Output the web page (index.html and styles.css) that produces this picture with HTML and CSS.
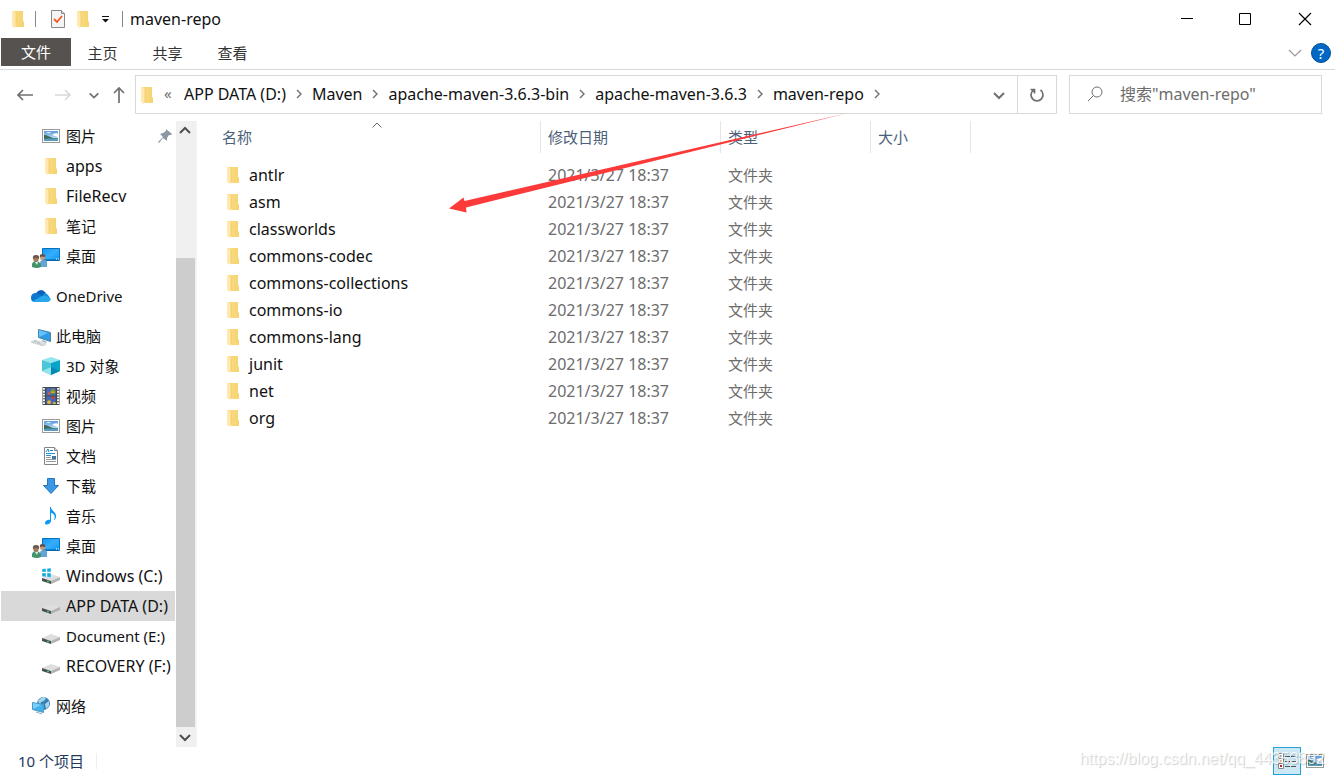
FILE: index.html
```
<!DOCTYPE html>
<html lang="zh-CN">
<head>
<meta charset="utf-8">
<title>maven-repo</title>
<link rel="stylesheet" href="styles.css">
</head>
<body>
<svg class="defs" aria-hidden="true">
  <defs>
    <linearGradient id="gold" x1="0" x2="1"><stop offset="0" stop-color="#fbdc86"/><stop offset="1" stop-color="#f5d370"/></linearGradient>
    <linearGradient id="sky" x1="0" y1="0" x2="0" y2="1"><stop offset="0" stop-color="#5a9be0"/><stop offset="1" stop-color="#e4f4fb"/></linearGradient>
    <linearGradient id="screen" x1="0" y1="0" x2="1" y2="1"><stop offset="0" stop-color="#1594f0"/><stop offset=".5" stop-color="#35aefc"/><stop offset="1" stop-color="#0c96f5"/></linearGradient>
    <symbol id="folder" viewBox="0 0 18 18">
      <path d="M4 1h10v10l1 1v5H5z" fill="url(#gold)"/>
      <path d="M3 1l4 2v13l-1 2-3-2z" fill="#ffe9ae"/><path d="M7 3v13" stroke="#edc65f" stroke-width=".7"/>
    </symbol>
    <symbol id="picture" viewBox="0 0 18 18">
      <rect x=".5" y="2.500" width="17" height="13" fill="#fff" stroke="#9a9a9a"/>
      <path d="M2 4h14v10H2z" fill="url(#sky)"/><path d="M2 8c4 0 5 2 9 3h5v1H2z" fill="#3b6d5d"/><path d="M2 12c5-1 9 0 14-1v3H2z" fill="#5b9cba"/><path d="M4 6q3-2 5 0zM10 8q4-3 6-1v3z" fill="#fff"/>
    </symbol>
    <symbol id="desktop" viewBox="0 0 28 22">
      <path d="M10.500 1.500h17v12h-17z" fill="url(#screen)" stroke="#0873bd"/><path d="M11 13h16" stroke="#075da0"/><path d="M24 12h1m1 0h1" stroke="#fff"/>
      <path d="M8 20v-4q0-3 4-3t3 4v3z" fill="#64a5d5"/><circle cx="10.500" cy="10.500" r="2.500" fill="#c79a75"/><path d="M8 10q-1-3 2.500-3t2.500 3q-3-1-5 0" fill="#5d5048"/>
      <path d="M0 20v-3q1-3 4-3t5 3v3q-4 2-9 0" fill="#43946b"/><circle cx="4" cy="12" r="2.700" fill="#a77957"/><path d="M1 12q-1-4 3-4t3 4q-3-2-6 0" fill="#6a5b50"/><path d="M3 15l2 3 1-3z" fill="#e5eeee"/>
    </symbol>
    <symbol id="cloud" viewBox="0 0 20 18">
      <path d="M5 6q5-6 10 0l-5 6-8-1z" fill="#0860b8"/><path d="M0 11q0-5 5-5 3 0 7 4l-5 5H4q-4 0-4-4" fill="#0c79cf"/><path d="M12 7q3-2 5 1l2 3-7 1z" fill="#1490df"/><path d="M2 14l9-5q5-1 9 3-1 3-4 3H4z" fill="#28a8ea"/>
    </symbol>
    <symbol id="pc" viewBox="0 0 20 18">
      <path d="M7.500 1.500l12 3v9l-12-4z" fill="#2f9be8" stroke="#4b84a3"/><path d="M8 2l9 3-9 4z" fill="#62c3ff"/><path d="M12 12l4 2-1 1-5-2" fill="#9fb2bd"/><path d="M0 14l4-2 11 4-3 2z" fill="#e4e8ea" stroke="#b5bcc0" stroke-width=".6"/><path d="M3 13l9 4M2 15l3-2m1 3l3-2" stroke="#9ea7ad" stroke-width=".5"/>
    </symbol>
    <symbol id="cube" viewBox="0 0 18 18">
      <path d="M0 3l9-3 9 3-9 3z" fill="#92e6ee"/><path d="M0 3l9 3v12l-9-4z" fill="#4bc5d8"/><path d="M9 6l9-3v11l-9 4z" fill="#0ba3c8"/><path d="M0 14l9-4v8z" fill="#93e5ea"/><path d="M9 10l9 4-9 4z" fill="#058bb3"/>
    </symbol>
    <symbol id="film" viewBox="0 0 18 19">
      <path d="M0 0h18v19H0z" fill="#44474b"/><path d="M1.500 1v18M16.500 1v18" stroke="#fff" stroke-width="2" stroke-dasharray="2 1"/><path d="M4 1h10v8H4zm0 9h10v8H4z" fill="#4769b4"/><path d="M5 8l2-3 2 3z" fill="#e65c36"/><circle cx="11" cy="5" r="2.500" fill="#d5a728"/><path d="M9 4h5M9 7h5" stroke="#3e873b"/><circle cx="7" cy="16" r="2" fill="#e7b632"/><path d="M9 10l2 4 2-4z" fill="#ca3d2e"/><path d="M11 17h3" stroke="#d5b839" stroke-width="2"/>
    </symbol>
    <symbol id="doc" viewBox="0 0 18 18">
      <path d="M2.500.5h10l3 3v14h-13z" fill="#fff" stroke="#858585"/><path d="M12.500.5v3h3" fill="#ddd" stroke="#858585"/><path d="M4 5l2-3 1 3M8 3.500h3" stroke="#148bd0" fill="none"/><path d="M4 6.500h9M4 8.500h5" stroke="#2493d5"/><path d="M10 9h4v3h-4z" fill="#3a78a9"/><path d="M4 10.500h5m-5 2h10M4 14.500h10" stroke="#999"/>
    </symbol>
    <symbol id="down" viewBox="0 0 18 18"><path d="M5.500 1.500h7v7h4L9 16.500l-7.500-8h4z" fill="#3b98e7" stroke="#2475bb"/></symbol>
    <symbol id="note" viewBox="0 0 18 18"><path d="M8 0h1c0 4 6 5 5 10-.4 2-1 3-2 3 2-5-1-7-3-7v8c0 3-6 5-6 2 0-2 3-4 5-3z" fill="#0c99f5"/></symbol>
    <symbol id="drive" viewBox="0 0 20 18"><path d="M1 10l9-4 9 3-9 4z" fill="#dedede"/><path d="M1 10l9 3v3l-9-3z" fill="#4b4d4e"/><path d="M10 13l9-4v3l-9 4z" fill="#b2b2b2"/><path d="M6 13.500h2" stroke="#26dc50" stroke-width="1.500"/></symbol>
    <symbol id="windrive" viewBox="0 0 20 18"><use href="#drive"/><path d="M1 1l4-.5V4H1zm5-.6L10 0v4H6zM1 5h4v4l-4-.5zm5 0h4v4.500L6 9z" fill="#11addf" stroke="#fff" stroke-width=".4"/></symbol>
    <symbol id="network" viewBox="0 0 18 18"><circle cx="11.500" cy="6.500" r="6.500" fill="#3381b4"/><path d="M6 4q5-6 8-3l-2 3-3 1-1 3zm7 3l4-3v5l-3 3z" fill="#a8d5e5"/><path d="M.5 5.500l11 2v8l-11-3z" fill="#43afed" stroke="#4f98c2"/><path d="M1 6l8 2-8 4z" fill="#7ad0ff"/><path d="M4 15l6 2" stroke="#a1afb7"/></symbol>
    <symbol id="chev-r" viewBox="0 0 10 10"><path d="M3 1L7 5 3 9" fill="none" stroke="currentColor" stroke-width="1.400"/></symbol>
    <symbol id="chev-d" viewBox="0 0 14 14"><path d="M2 5l5 5 5-5" fill="none" stroke="currentColor" stroke-width="2"/></symbol>
  </defs>
</svg>
<div class="window">
  <header class="titlebar">
    <div class="quick">
      <svg class="i18"><use href="#folder"/></svg>
      <span class="rule first"></span>
      <button class="plain" aria-label="属性"><svg class="i18" viewBox="0 0 18 18"><path d="M2.500.5h10l3 3v14h-13z" fill="#f4f4f4" stroke="#888"/><path d="M12.500.5v3h3" fill="#ddd" stroke="#888"/><path d="M5 9l3 3 5-6" fill="none" stroke="#f05a1a" stroke-width="1.800"/></svg></button>
      <button class="plain newfolder" aria-label="新建文件夹"><svg class="i18"><use href="#folder"/></svg></button>
      <button class="plain" aria-label="自定义快速访问工具栏"><svg class="i8" viewBox="0 0 8 8"><path d="M1 1.500h7" stroke="#111"/><path d="M1 4h7L4.500 7.500z" fill="#111"/></svg></button>
      <span class="rule"></span>
      <h1>maven-repo</h1>
    </div>
    <div class="controls">
      <button aria-label="最小化"><svg class="i14" viewBox="0 0 14 14"><path d="M1 6.500h12" stroke="#000"/></svg></button>
      <button aria-label="最大化"><svg class="i14" viewBox="0 0 14 14"><path d="M1.500 1.500h11v11h-11z" fill="none" stroke="#000"/></svg></button>
      <button aria-label="关闭"><svg class="i14" viewBox="0 0 14 14"><path d="M1 1l12 12M13 1L1 13" stroke="#000" stroke-width="1.200"/></svg></button>
    </div>
  </header>
  <nav class="ribbon">
    <button class="file">文件</button><button>主页</button><button>共享</button><button>查看</button>
    <span class="grow"></span>
    <button class="icon" aria-label="展开功能区"><svg class="i14" viewBox="0 0 14 14"><path d="M1 4l6 6 6-6" fill="none" stroke="#999" stroke-width="1.200"/></svg></button>
    <button class="help" aria-label="帮助">?</button>
  </nav>
  <div class="navrow">
    <div class="history">
      <button class="plain" aria-label="后退"><svg class="i18" viewBox="0 0 18 18"><path d="M17 9H2M7 4L2 9l5 5" fill="none" stroke="#707070" stroke-width="1.700"/></svg></button>
      <button class="plain off" aria-label="前进"><svg class="i18" viewBox="0 0 18 18"><path d="M1 9h15M11 4l5 5-5 5" fill="none" stroke="#d9d9d9" stroke-width="1.700"/></svg></button>
      <button class="plain recent" aria-label="最近"><svg class="i12"><use href="#chev-d"/></svg></button>
      <button class="plain" aria-label="向上"><svg class="i18" viewBox="0 0 18 18"><path d="M9 17V2M4 7l5-5 5 5" fill="none" stroke="#707070" stroke-width="1.700"/></svg></button>
    </div>
    <div class="address">
      <svg class="i18"><use href="#folder"/></svg>
      <span class="more">«</span>
      <ol>
        <li><button>APP DATA (D:)</button><svg class="i10"><use href="#chev-r"/></svg></li>
        <li><button>Maven</button><svg class="i10"><use href="#chev-r"/></svg></li>
        <li><button>apache-maven-3.6.3-bin</button><svg class="i10"><use href="#chev-r"/></svg></li>
        <li><button>apache-maven-3.6.3</button><svg class="i10"><use href="#chev-r"/></svg></li>
        <li><button>maven-repo</button><svg class="i10"><use href="#chev-r"/></svg></li>
      </ol>
      <span class="grow"></span>
      <button class="drop" aria-label="上一个位置"><svg class="i14"><use href="#chev-d"/></svg></button>
      <button class="refresh" aria-label="刷新"><svg class="i18" viewBox="0 0 18 18"><path d="M12.500 4a6 6 0 1 1-7 0M2.500 3.500h4v4" fill="none" stroke="#707070" stroke-width="1.700"/></svg></button>
    </div>
    <label class="search">
      <svg class="i18" viewBox="0 0 18 18"><circle cx="11" cy="6" r="5" fill="none" stroke="#707070"/><path d="M7.500 9.500L2 15" stroke="#707070"/></svg>
      <input type="text" aria-label="搜索" placeholder='搜索"maven-repo"'>
    </label>
  </div>
  <div class="body">
    <nav class="side">
      <ul>
        <li class="sub"><svg class="i18"><use href="#picture"/></svg><a href="#">图片</a><svg class="pin i14" viewBox="0 0 14 14"><path d="M8 0l6 5-1 1-2 0-2 3v3L5 9l-4 5-1-1 5-5-3-3 3-1 3-2z" fill="#8b98a3"/></svg></li>
        <li class="sub"><svg class="i18"><use href="#folder"/></svg><a class="latin" href="#">apps</a></li>
        <li class="sub"><svg class="i18"><use href="#folder"/></svg><a class="latin" href="#">FileRecv</a></li>
        <li class="sub"><svg class="i18"><use href="#folder"/></svg><a href="#">笔记</a></li>
        <li><svg class="desk"><use href="#desktop"/></svg><a href="#">桌面</a></li>
      </ul>
      <ul><li class="top"><svg class="i20"><use href="#cloud"/></svg><a href="#">OneDrive</a></li></ul>
      <ul>
        <li class="top"><svg class="i20 low"><use href="#pc"/></svg><a href="#">此电脑</a></li>
        <li class="sub"><svg class="i18"><use href="#cube"/></svg><a href="#">3D 对象</a></li>
        <li class="sub"><svg class="i18"><use href="#film"/></svg><a href="#">视频</a></li>
        <li class="sub"><svg class="i18"><use href="#picture"/></svg><a href="#">图片</a></li>
        <li class="sub"><svg class="i18"><use href="#doc"/></svg><a href="#">文档</a></li>
        <li class="sub"><svg class="i18"><use href="#down"/></svg><a href="#">下载</a></li>
        <li class="sub"><svg class="i18"><use href="#note"/></svg><a href="#">音乐</a></li>
        <li><svg class="desk"><use href="#desktop"/></svg><a href="#">桌面</a></li>
        <li class="disk"><svg class="i20"><use href="#windrive"/></svg><a class="latin" href="#">Windows (C:)</a></li>
        <li class="disk current"><svg class="i20"><use href="#drive"/></svg><a class="latin" href="#">APP DATA (D:)</a></li>
        <li class="disk"><svg class="i20"><use href="#drive"/></svg><a href="#">Document (E:)</a></li>
        <li class="disk"><svg class="i20"><use href="#drive"/></svg><a class="latin" href="#">RECOVERY (F:)</a></li>
      </ul>
      <ul><li class="top"><svg class="i20"><use href="#network"/></svg><a href="#">网络</a></li></ul>
    </nav>
    <div class="scroll">
      <button aria-label="向上滚动"><svg class="i14 flip"><use href="#chev-d"/></svg></button>
      <div class="track"><div class="thumb"></div></div>
      <button aria-label="向下滚动"><svg class="i14"><use href="#chev-d"/></svg></button>
    </div>
    <main>
      <table>
        <thead><tr>
          <th class="c-name"><div>名称<svg class="sort" viewBox="0 0 10 6"><path d="M.5 5.500L5 1l4.500 4.500" fill="none" stroke="#666"/></svg></div></th>
          <th class="c-date"><div>修改日期</div></th><th class="c-type"><div>类型</div></th><th class="c-size"><div>大小</div></th><th></th>
        </tr></thead>
        <tbody>
          <tr><td><svg class="i18"><use href="#folder"/></svg>antlr</td><td class="latin">2021/3/27 18:37</td><td>文件夹</td><td></td><td></td></tr>
          <tr><td><svg class="i18"><use href="#folder"/></svg>asm</td><td class="latin">2021/3/27 18:37</td><td>文件夹</td><td></td><td></td></tr>
          <tr><td><svg class="i18"><use href="#folder"/></svg>classworlds</td><td class="latin">2021/3/27 18:37</td><td>文件夹</td><td></td><td></td></tr>
          <tr><td><svg class="i18"><use href="#folder"/></svg>commons-codec</td><td class="latin">2021/3/27 18:37</td><td>文件夹</td><td></td><td></td></tr>
          <tr><td><svg class="i18"><use href="#folder"/></svg>commons-collections</td><td class="latin">2021/3/27 18:37</td><td>文件夹</td><td></td><td></td></tr>
          <tr><td><svg class="i18"><use href="#folder"/></svg>commons-io</td><td class="latin">2021/3/27 18:37</td><td>文件夹</td><td></td><td></td></tr>
          <tr><td><svg class="i18"><use href="#folder"/></svg>commons-lang</td><td class="latin">2021/3/27 18:37</td><td>文件夹</td><td></td><td></td></tr>
          <tr><td><svg class="i18"><use href="#folder"/></svg>junit</td><td class="latin">2021/3/27 18:37</td><td>文件夹</td><td></td><td></td></tr>
          <tr><td><svg class="i18"><use href="#folder"/></svg>net</td><td class="latin">2021/3/27 18:37</td><td>文件夹</td><td></td><td></td></tr>
          <tr><td><svg class="i18"><use href="#folder"/></svg>org</td><td class="latin">2021/3/27 18:37</td><td>文件夹</td><td></td><td></td></tr>
        </tbody>
      </table>
      <svg class="arrow" viewBox="0 0 400 101" aria-hidden="true"><path d="M0 95.500L14.500 84.500l1 3.500L399 0 17 94.500l.5 5z" fill="#fc3a3a"/></svg>
    </main>
  </div>
  <footer class="status">
    <span class="count">10 个项目</span>
    <span class="grow"></span>
    <button class="view on" aria-label="详细信息"><svg class="i20" viewBox="0 0 20 18"><path d="M1.500 1.500h5v5h-5zm0 5h5v5h-5zm0 5h5v5h-5z" fill="#fff" stroke="#888"/><path d="M3 4h2" stroke="#38a"/><path d="M3 9h2" stroke="#c84"/><path d="M3 14h2" stroke="#b22" stroke-width="2"/><path d="M8 4.500h5m1 0h5m-11 5h5m1 0h5m-11 5h5m1 0h5" stroke="#555"/></svg></button>
    <button class="view" aria-label="大缩略图"><svg class="i18"><use href="#picture"/></svg></button>
    <span class="watermark">https://blog.csdn.net/qq_44353892</span>
  </footer>
</div>
</body>
</html>
```
FILE: styles.css
```
* { box-sizing: border-box; }
body {
  margin: 0;
  background: #fff;
  color: #111;
  font: 15px/20px "Noto Sans", "Noto Sans CJK SC", sans-serif;
}
button, input { font: inherit; color: inherit; border: 0; padding: 0; background: none; }
button { display: flex; align-items: center; justify-content: center; }
ul, ol { list-style: none; margin: 0; padding: 0; }
a { color: inherit; text-decoration: none; }
svg { display: block; flex: none; }
.defs { position: absolute; width: 0; height: 0; }
.i8 { width: 8px; height: 8px; }
.i10 { width: 10px; height: 10px; }
.i12 { width: 12px; height: 12px; }
.i14 { width: 14px; height: 14px; }
.i18 { width: 18px; height: 18px; }
.i20 { width: 20px; height: 18px; }
.grow { flex: 1; }
.latin { font-size: 16px; }

.window { display: flex; flex-direction: column; min-height: 100vh; }
.titlebar { display: flex; justify-content: space-between; height: 38px; }
.quick { display: flex; align-items: center; padding-left: 9px; }
.rule { width: 1px; height: 16px; background: #888; margin: 0 7px 0 13px; }
.rule.first { margin: 0 13px 0 8px; }
.newfolder { margin: 0 9px 0 7px; }
h1 { margin: 0; font-size: 16px; font-weight: 400; }
.controls { display: flex; padding-left: 1px; }
.controls button { width: 58px; }
.controls button:last-child { width: 61px; }

.ribbon { display: flex; height: 32px; border-bottom: 1px solid #d9d9d9; padding: 0 4px 0 1px; color: #333; }
.ribbon button { width: 65px; height: 29px; }
.ribbon .file { width: 70px; height: 28px; background: #555250; color: #fff; margin-right: -1px; }
.ribbon .icon { width: 30px; }
.ribbon .help { width: 20px; height: 20px; border-radius: 50%; background: #0067c5; border: 1px solid #034f93; color: #fff; margin: 5px 0 0 1px; }

.navrow { display: flex; height: 50px; padding: 5px 13px 6px 16px; }
.history { display: flex; align-items: center; width: 119px; color: #707070; }
.history .off { margin-left: 20px; }
.history .recent { margin: 0 10px 0 16px; }
.address { flex: 1; display: flex; align-items: center; border: 1px solid #d9d9d9; padding-left: 2px; color: #707070; }
.address ol { display: flex; padding-bottom: 2px; font-size: 16px; }
.address li { display: flex; align-items: center; gap: 8px; margin-right: 8px; }
.address li button { color: #111; }
.more { width: 20px; margin-left: 8px; padding-bottom: 3px; }
.drop { width: 36px; height: 36px; }
.refresh { width: 39px; height: 37px; border-left: 1px solid #d9d9d9; }
.search { width: 253px; margin-left: 12px; border: 1px solid #d9d9d9; display: flex; align-items: center; gap: 16px; padding: 0 8px 0 16px; }
.search input { flex: 1; min-width: 0; outline: 0; font-size: 16px; padding-bottom: 2px; }
.search input::placeholder { color: #6d6d6d; opacity: 1; }

.body { flex: 1; display: flex; padding-top: 1px; }
.side { width: 176px; padding: 0 1px; display: flex; flex-direction: column; gap: 10px; }
.side li { display: flex; align-items: center; height: 30px; padding-left: 31px; gap: 6px; white-space: nowrap; }
.side .sub { padding-left: 41px; }
.side .top { padding-left: 30px; gap: 5px; }
.side .disk { padding-left: 40px; gap: 5px; }
.side .disk svg, .side .low { margin-top: 2px; }
.side .current { background: #d9d9d9; }
.desk { width: 28px; height: 22px; margin-top: 4px; }
.pin { margin-left: auto; margin-right: 3px; }
.scroll { width: 20px; display: flex; flex-direction: column; background: #f0f0f0; color: #505050; }
.scroll button { height: 20px; padding-right: 2px; }
.flip { transform: rotate(180deg); }
.track { flex: 1; display: flex; align-items: flex-end; }
.thumb { width: 19px; height: 80%; background: #cdcdcd; }

main { flex: 1; position: relative; border-left: 1px solid #f5f5f5; }
table { width: 100%; border-collapse: collapse; table-layout: fixed; color: #6d6d6d; }
th { padding: 0 0 8px; font-weight: 400; text-align: left; color: #4c607a; }
th div { height: 32px; padding-left: 7px; border-right: 1px solid #e5e5e5; display: flex; align-items: center; position: relative; }
th:last-child { width: auto; }
.c-name { width: 344px; }
.c-name div { padding-left: 25px; }
.c-date { width: 180px; }
.c-type { width: 150px; }
.c-size { width: 100px; }
.sort { position: absolute; top: 1px; left: 175px; width: 10px; height: 6px; }
td { height: 27px; padding: 0 0 0 7px; }
td:first-child { padding-left: 27px; color: #111; font-size: 16px; }
td svg { display: inline-block; vertical-align: -3px; margin-right: 7px; }
.arrow { position: absolute; left: 252px; top: -8px; width: 400px; height: 101px; }

.status { position: relative; display: flex; align-items: center; height: 30px; padding: 0 6px 2px 18px; color: #1e395b; }
.count { padding-right: 12px; border-right: 1px solid #eee; line-height: 16px; }
.view { width: 28px; height: 28px; }
.view.on { background: #cce8f5; border: 1px solid #26a0da; }
.watermark { position: absolute; right: 10px; top: 2px; font: 16px/20px "Liberation Sans", sans-serif; color: #fffc; text-shadow: 1px 1px 1px #0003; }
```
